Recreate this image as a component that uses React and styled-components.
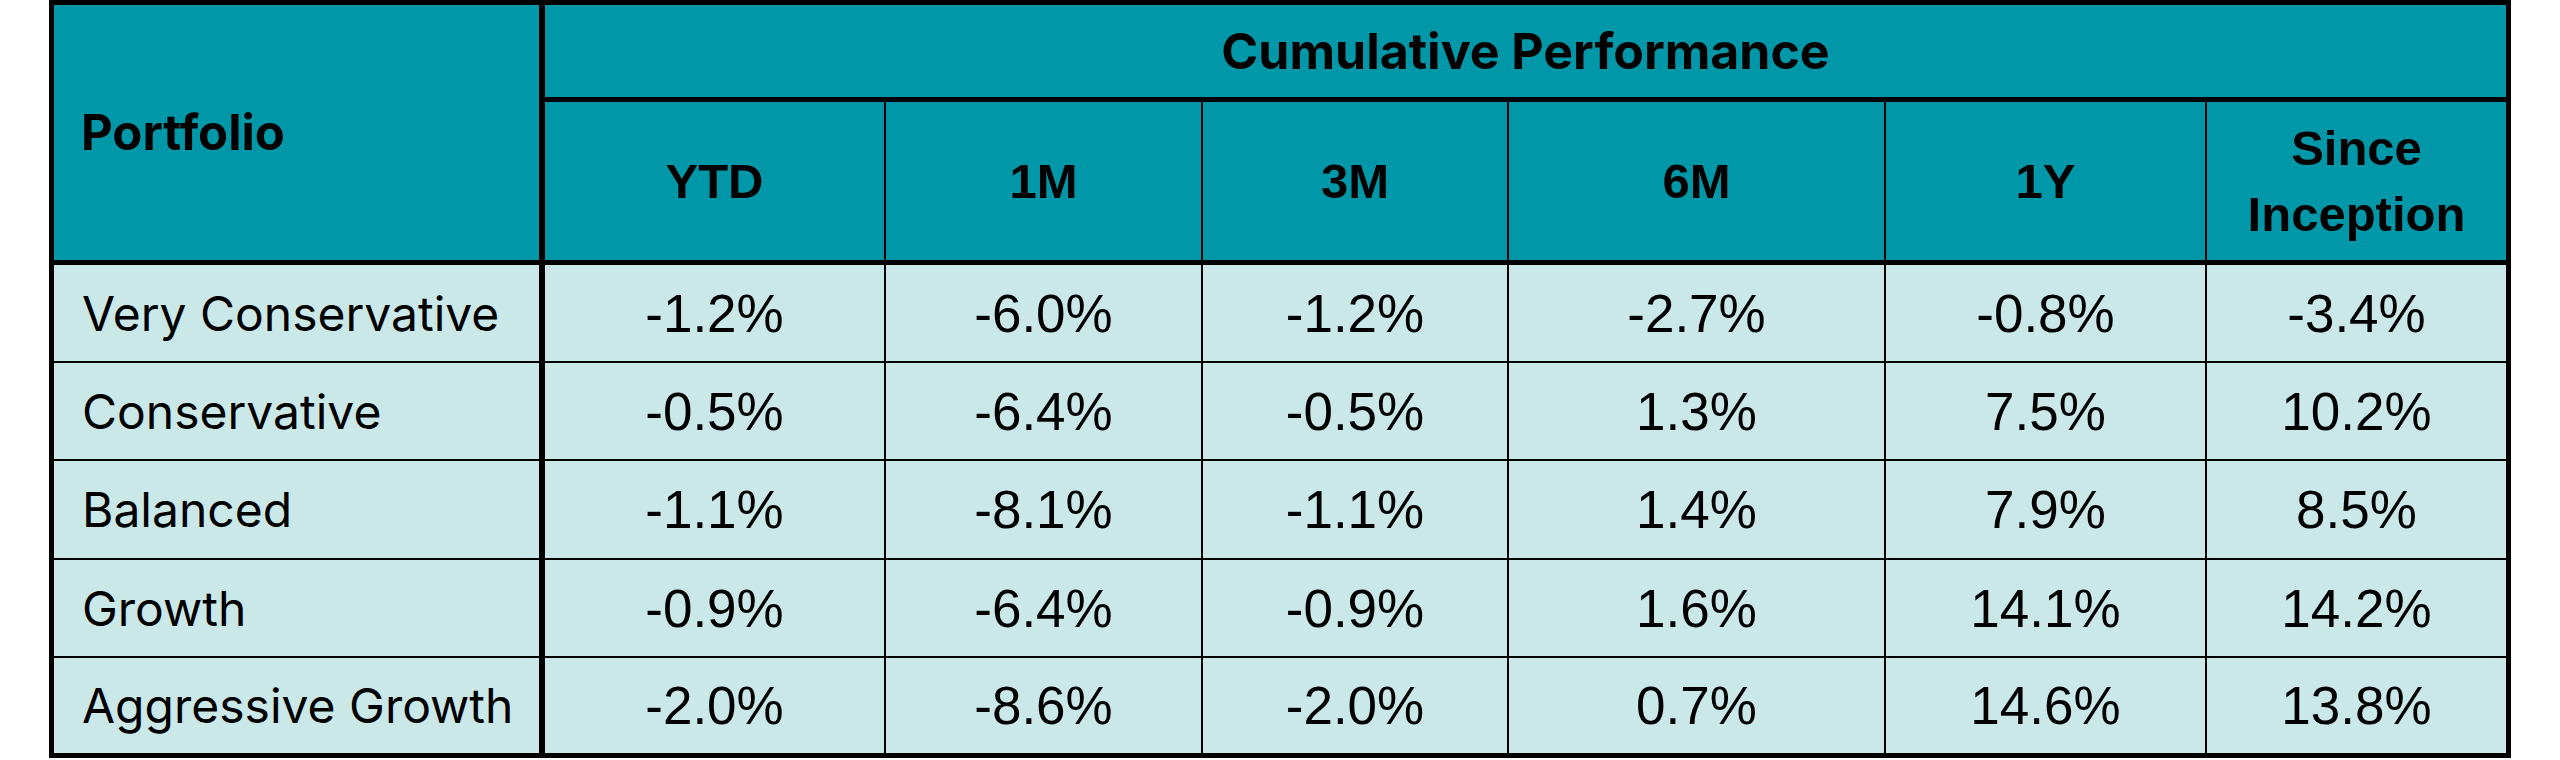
import React from 'react';
import styled, { createGlobalStyle } from 'styled-components';

const GlobalStyle = createGlobalStyle`
  html, body {
    margin: 0;
    padding: 0;
    background: #ffffff;
  }
  * {
    box-sizing: border-box;
  }
`

const Page = styled.div`
  width: 2560px;
  height: 760px;
  padding-left: 49px;
`

const Table = styled.div`
  display: grid;
  width: 2462px;
  grid-template-columns: 491px 341px 317px 306px 377px 321px 304px;
  grid-template-rows: 97px 163px 98px 98px 99px 98px 100px;
  border: 5px solid #000;
  border-right: none;
  border-bottom: none;
  color: #000;
`

const HeadCell = styled.div`
  background: #0098a9;
  display: flex;
  align-items: center;
  border-bottom: 5px solid #000;
`

const PortfolioHead = styled(HeadCell)`
  grid-row: 1 / span 2;
  border-right: 6px solid #000;
  padding-left: 27px;
  font-family: Inter, "Liberation Sans", sans-serif;
  font-weight: 700;
  font-size: 49px;
`

const GroupHead = styled(HeadCell)`
  grid-column: 2 / span 6;
  justify-content: center;
  border-right: 5px solid #000;
  font-family: Inter, "Liberation Sans", sans-serif;
  font-weight: 700;
  font-size: 50px;
`

const PeriodHead = styled(HeadCell)`
  justify-content: center;
  text-align: center;
  border-right: ${p => (p.$last ? '5px' : '2px')} solid #000;
  font-family: "Liberation Sans", Arial, sans-serif;
  font-weight: 700;
  font-size: 49px;
  line-height: 66px;
`

const BodyCell = styled.div`
  background: #cbe8e9;
  display: flex;
  align-items: center;
  border-bottom: ${p => (p.$lastRow ? '5px' : '2px')} solid #000;
`

const LabelCell = styled(BodyCell)`
  border-right: 6px solid #000;
  padding-left: 28px;
  font-family: Inter, "Liberation Sans", sans-serif;
  font-size: 48px;
  white-space: nowrap;
`

const ValueCell = styled(BodyCell)`
  justify-content: center;
  border-right: ${p => (p.$last ? '5px' : '2px')} solid #000;
  font-family: "Liberation Sans", Arial, sans-serif;
  font-size: 53px;
`

const periods = ['YTD', '1M', '3M', '6M', '1Y', 'Since\nInception'];

const rows = [
  { name: 'Very Conservative', values: ['-1.2%', '-6.0%', '-1.2%', '-2.7%', '-0.8%', '-3.4%'] },
  { name: 'Conservative', values: ['-0.5%', '-6.4%', '-0.5%', '1.3%', '7.5%', '10.2%'] },
  { name: 'Balanced', values: ['-1.1%', '-8.1%', '-1.1%', '1.4%', '7.9%', '8.5%'] },
  { name: 'Growth', values: ['-0.9%', '-6.4%', '-0.9%', '1.6%', '14.1%', '14.2%'] },
  { name: 'Aggressive Growth', values: ['-2.0%', '-8.6%', '-2.0%', '0.7%', '14.6%', '13.8%'] },
];

function App() {
  return (
    <Page>
      <GlobalStyle />
      <Table>
        <PortfolioHead>Portfolio</PortfolioHead>
        <GroupHead>Cumulative Performance</GroupHead>
        {periods.map((period, i) => (
          <PeriodHead key={period} $last={i === periods.length - 1}>
            <span>
              {period.split('\n').map((line, j) => (
                <React.Fragment key={line}>
                  {j > 0 && <br />}
                  {line}
                </React.Fragment>
              ))}
            </span>
          </PeriodHead>
        ))}
        {rows.map((row, r) => {
          const lastRow = r === rows.length - 1;
          return (
            <React.Fragment key={row.name}>
              <LabelCell $lastRow={lastRow}>{row.name}</LabelCell>
              {row.values.map((value, i) => (
                <ValueCell key={i} $lastRow={lastRow} $last={i === row.values.length - 1}>
                  {value}
                </ValueCell>
              ))}
            </React.Fragment>
          );
        })}
      </Table>
    </Page>
  );
}

export default App;
